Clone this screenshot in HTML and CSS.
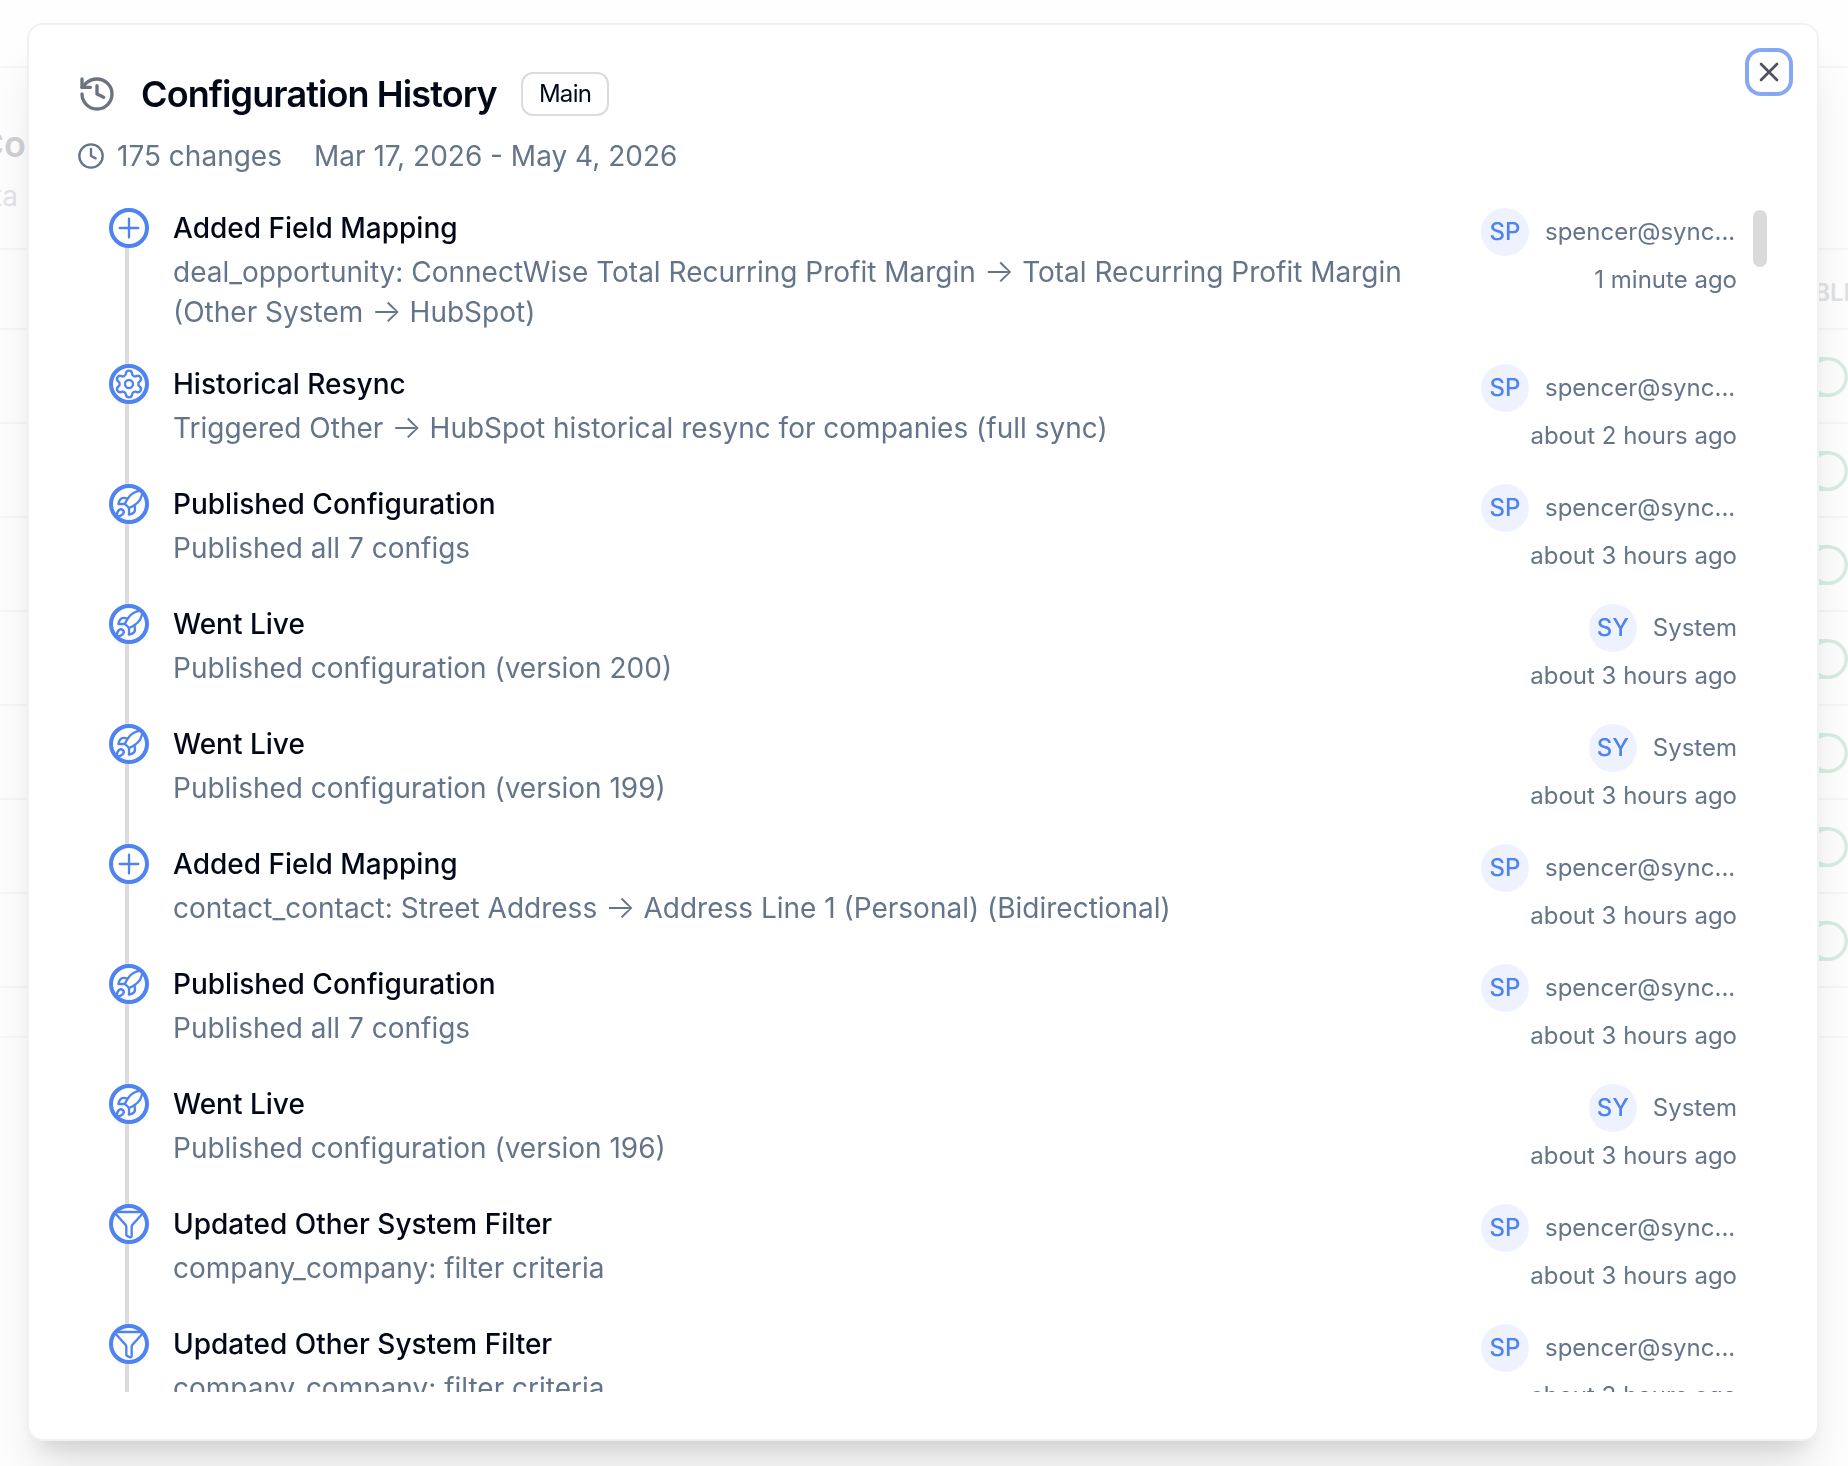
FILE: index.html
```html
<!DOCTYPE html>
<html lang="en">
<head>
<meta charset="utf-8">
<meta name="viewport" content="width=device-width, initial-scale=1">
<title>Configuration History</title>
<link rel="stylesheet" href="styles.css">
</head>
<body>
<svg class="sprite" aria-hidden="true">
  <symbol id="i-plus" viewBox="0 0 24 24"><path d="M5 12h14M12 5v14"/></symbol>
  <symbol id="i-gear" viewBox="0 0 24 24"><path d="M9.671 4.136a2.34 2.34 0 0 1 4.659 0 2.34 2.34 0 0 0 3.319 1.915 2.34 2.34 0 0 1 2.33 4.033 2.34 2.34 0 0 0 0 3.831 2.34 2.34 0 0 1-2.33 4.033 2.34 2.34 0 0 0-3.319 1.915 2.34 2.34 0 0 1-4.659 0 2.34 2.34 0 0 0-3.32-1.915 2.34 2.34 0 0 1-2.33-4.033 2.34 2.34 0 0 0 0-3.831A2.34 2.34 0 0 1 6.35 6.051a2.34 2.34 0 0 0 3.319-1.915"/><circle cx="12" cy="12" r="3"/></symbol>
  <symbol id="i-rocket" viewBox="0 0 24 24"><path d="M4.5 16.5c-1.5 1.26-2 5-2 5s3.74-.5 5-2c.71-.84.7-2.13-.09-2.91a2.18 2.18 0 0 0-2.91-.09z"/><path d="m12 15-3-3a22 22 0 0 1 2-3.95A12.88 12.88 0 0 1 22 2c0 2.72-.78 7.5-6 11a22.35 22.35 0 0 1-4 2z"/><path d="M9 12H4s.55-3.03 2-4c1.62-1.08 5 0 5 0"/><path d="M12 15v5s3.03-.55 4-2c1.08-1.62 0-5 0-5"/></symbol>
  <symbol id="i-funnel" viewBox="0 0 24 24"><path d="M10 20a1 1 0 0 0 .553.895l2 1A1 1 0 0 0 14 21v-7a2 2 0 0 1 .517-1.341L21.74 4.67A1 1 0 0 0 21 3H3a1 1 0 0 0-.742 1.67l7.225 7.989A2 2 0 0 1 10 14z"/></symbol>
</svg>

<div class="page">
  <div class="page-nav"></div>
  <div class="page-head">
    <p class="page-title">Co</p>
    <p class="page-sub">ta</p>
  </div>
  <table class="page-table">
    <thead><tr><td></td><th scope="col">ENABLED</th></tr></thead>
    <tbody>
      <tr><td></td><td><input class="switch" type="checkbox" role="switch" aria-label="Enable row 1" checked></td></tr>
      <tr><td></td><td><input class="switch" type="checkbox" role="switch" aria-label="Enable row 2" checked></td></tr>
      <tr><td></td><td><input class="switch" type="checkbox" role="switch" aria-label="Enable row 3" checked></td></tr>
      <tr><td></td><td><input class="switch" type="checkbox" role="switch" aria-label="Enable row 4" checked></td></tr>
      <tr><td></td><td><input class="switch" type="checkbox" role="switch" aria-label="Enable row 5" checked></td></tr>
      <tr><td></td><td><input class="switch" type="checkbox" role="switch" aria-label="Enable row 6" checked></td></tr>
      <tr><td></td><td><input class="switch" type="checkbox" role="switch" aria-label="Enable row 7" checked></td></tr>
    </tbody>
  </table>
  <div class="page-foot"></div>
</div>

<div class="overlay">
  <section class="modal" role="dialog" aria-modal="true" aria-labelledby="modal-title">
    <button class="close" type="button" aria-label="Close">
      <svg class="close-icon" viewBox="0 0 24 24"><path d="M18 6 6 18M6 6l12 12"/></svg>
    </button>

    <header class="modal-head">
      <div class="title-row">
        <svg class="history-icon" viewBox="0 0 24 24" aria-hidden="true"><path d="M3 12a9 9 0 1 0 9-9 9.750 9.750 0 0 0-6.740 2.740L3 8"/><path d="M3 3v5h5"/><path d="M12 7v5l4 2"/></svg>
        <h1 class="title" id="modal-title">Configuration History</h1>
        <span class="badge">Main</span>
      </div>
      <div class="summary">
        <span class="count">
          <svg class="clock-icon" viewBox="0 0 24 24" aria-hidden="true"><circle cx="12" cy="12" r="10"/><path d="M12 6v6l4 2"/></svg>
          175 changes
        </span>
        <span>Mar 17, 2026 - May 4, 2026</span>
      </div>
    </header>

    <div class="scroller">
      <ol class="timeline">
        <li class="event">
          <span class="marker"><svg class="icon"><use href="#i-plus"/></svg></span>
          <div class="what"><h2 class="event-title">Added Field Mapping</h2><p class="event-text">deal_opportunity: ConnectWise Total Recurring Profit Margin <span class="arrow">→</span> Total Recurring Profit Margin (Other System <span class="arrow">→</span> HubSpot)</p></div>
          <div class="who"><div class="user"><span class="avatar">SP</span><span class="name name-cut">spencer@sync...</span></div><time class="when">1 minute ago</time></div>
        </li>
        <li class="event">
          <span class="marker"><svg class="icon"><use href="#i-gear"/></svg></span>
          <div class="what"><h2 class="event-title">Historical Resync</h2><p class="event-text">Triggered Other <span class="arrow">→</span> HubSpot historical resync for companies (full sync)</p></div>
          <div class="who"><div class="user"><span class="avatar">SP</span><span class="name name-cut">spencer@sync...</span></div><time class="when">about 2 hours ago</time></div>
        </li>
        <li class="event">
          <span class="marker"><svg class="icon"><use href="#i-rocket"/></svg></span>
          <div class="what"><h2 class="event-title">Published Configuration</h2><p class="event-text">Published all 7 configs</p></div>
          <div class="who"><div class="user"><span class="avatar">SP</span><span class="name name-cut">spencer@sync...</span></div><time class="when">about 3 hours ago</time></div>
        </li>
        <li class="event">
          <span class="marker"><svg class="icon"><use href="#i-rocket"/></svg></span>
          <div class="what"><h2 class="event-title">Went Live</h2><p class="event-text">Published configuration (version 200)</p></div>
          <div class="who"><div class="user"><span class="avatar">SY</span><span class="name">System</span></div><time class="when">about 3 hours ago</time></div>
        </li>
        <li class="event">
          <span class="marker"><svg class="icon"><use href="#i-rocket"/></svg></span>
          <div class="what"><h2 class="event-title">Went Live</h2><p class="event-text">Published configuration (version 199)</p></div>
          <div class="who"><div class="user"><span class="avatar">SY</span><span class="name">System</span></div><time class="when">about 3 hours ago</time></div>
        </li>
        <li class="event">
          <span class="marker"><svg class="icon"><use href="#i-plus"/></svg></span>
          <div class="what"><h2 class="event-title">Added Field Mapping</h2><p class="event-text">contact_contact: Street Address <span class="arrow">→</span> Address Line 1 (Personal) (Bidirectional)</p></div>
          <div class="who"><div class="user"><span class="avatar">SP</span><span class="name name-cut">spencer@sync...</span></div><time class="when">about 3 hours ago</time></div>
        </li>
        <li class="event">
          <span class="marker"><svg class="icon"><use href="#i-rocket"/></svg></span>
          <div class="what"><h2 class="event-title">Published Configuration</h2><p class="event-text">Published all 7 configs</p></div>
          <div class="who"><div class="user"><span class="avatar">SP</span><span class="name name-cut">spencer@sync...</span></div><time class="when">about 3 hours ago</time></div>
        </li>
        <li class="event">
          <span class="marker"><svg class="icon"><use href="#i-rocket"/></svg></span>
          <div class="what"><h2 class="event-title">Went Live</h2><p class="event-text">Published configuration (version 196)</p></div>
          <div class="who"><div class="user"><span class="avatar">SY</span><span class="name">System</span></div><time class="when">about 3 hours ago</time></div>
        </li>
        <li class="event">
          <span class="marker"><svg class="icon"><use href="#i-funnel"/></svg></span>
          <div class="what"><h2 class="event-title">Updated Other System Filter</h2><p class="event-text">company_company: filter criteria</p></div>
          <div class="who"><div class="user"><span class="avatar">SP</span><span class="name name-cut">spencer@sync...</span></div><time class="when">about 3 hours ago</time></div>
        </li>
        <li class="event">
          <span class="marker"><svg class="icon"><use href="#i-funnel"/></svg></span>
          <div class="what"><h2 class="event-title">Updated Other System Filter</h2><p class="event-text">company_company: filter criteria</p></div>
          <div class="who"><div class="user"><span class="avatar">SP</span><span class="name name-cut">spencer@sync...</span></div><time class="when">about 3 hours ago</time></div>
        </li>
      </ol>
      <div class="thumb"></div>
    </div>
  </section>
</div>
</body>
</html>
```

FILE: styles.css
```css
* { box-sizing: border-box; margin: 0; padding: 0; }

:root {
  --ink: #020817;
  --muted: #64748b;
  --blue: #4f83f1;
  --line: #dbdbdb;
}

body {
  height: 100vh;
  overflow: hidden;
  background: #fefefe;
  color: var(--ink);
  font-family: Inter, "Liberation Sans", sans-serif;
  font-size: 28px;
  line-height: 40px;
}

.sprite { display: none; }

svg {
  display: block;
  flex: none;
  fill: none;
  stroke: currentColor;
  stroke-width: 2;
  stroke-linecap: round;
  stroke-linejoin: round;
}

/* Page behind the dialog, already faded */
.page-nav { height: 68px; border-bottom: 2px solid #f6f6f6; }

.page-head {
  width: 26px;
  height: 180px;
  padding-top: 54px;
  display: flex;
  flex-direction: column;
  align-items: flex-end;
  gap: 10px;
}
.page-title { font-size: 36px; line-height: 44px; font-weight: 600; color: #d0d1d4; }
.page-sub { padding-right: 8px; color: #e2e4e8; }

.page-table {
  width: 100%;
  table-layout: fixed;
  border-collapse: collapse;
  border-top: 2px solid #f6f6f6;
}
.page-table th {
  width: 88px;
  height: 80px;
  padding: 8px 0 0 4px;
  text-align: left;
  white-space: nowrap;
  font-size: 24px;
  font-weight: 600;
  color: #dfe1e5;
}
.page-table tr { border-bottom: 2px solid #f6f6f6; }
.page-table tbody td { height: 94px; text-align: right; }
.page-foot { height: 50px; border-bottom: 2px solid #f8f8f8; }

.switch {
  appearance: none;
  display: inline-block;
  vertical-align: middle;
  width: 72px;
  height: 40px;
  border-radius: 20px;
  background: radial-gradient(circle at 52px 20px, #fdfdfd 16px, #d6eee2 17px);
}

/* Dialog */
.overlay {
  position: fixed;
  inset: 0;
  display: flex;
  justify-content: center;
  padding: 23px 29px 25px 27px;
}

.modal {
  position: relative;
  display: flex;
  flex-direction: column;
  gap: 32px;
  width: 100%;
  max-width: 1792px;
  padding: 47px 48px;
  border: 2px solid #f1f1f1;
  border-radius: 16px;
  background: #fff;
  background-clip: padding-box;
  box-shadow: 0 40px 50px -10px rgba(0, 0, 0, .11), 0 16px 20px -10px rgba(0, 0, 0, .1);
}

.close {
  position: absolute;
  top: 31px;
  right: 32px;
  display: grid;
  place-items: center;
  width: 32px;
  height: 32px;
  border: 0;
  border-radius: 8px;
  background: #fff;
  color: #4d525d;
  box-shadow: 0 0 0 4px #fff, 0 0 0 8px #84a8f6;
}
.close-icon { width: 32px; height: 32px; }

.modal-head { display: flex; flex-direction: column; gap: 20px; }
.title-row { display: flex; align-items: center; gap: 24px; letter-spacing: -0.025em; }
.history-icon { width: 40px; height: 40px; color: #6b7280; }
.title { font-size: 36px; line-height: 44px; font-weight: 600; letter-spacing: -0.025em; }
.badge {
  padding: 4px 16px;
  border: 2px solid var(--line);
  border-radius: 12px;
  font-size: 24px;
  line-height: 32px;
}
.summary { display: flex; gap: 32px; color: var(--muted); }
.count { display: flex; align-items: center; gap: 12px; }
.clock-icon { width: 28px; height: 28px; }

.scroller { position: relative; flex: 1; min-height: 0; overflow: hidden; }
.timeline { position: relative; padding: 0 32px; list-style: none; }
.timeline::before {
  content: "";
  position: absolute;
  top: 0;
  bottom: 0;
  left: 48px;
  width: 4px;
  background: var(--line);
}

.event { display: flex; gap: 24px; padding-bottom: 32px; }
.marker {
  position: relative;
  flex: none;
  width: 40px;
  height: 40px;
  border: 4px solid var(--blue);
  border-radius: 50%;
  background: #fff;
  color: var(--blue);
}
.icon { width: 32px; height: 32px; stroke-width: 1.75; }

.what { flex: 1; display: flex; flex-direction: column; gap: 4px; }
.event-title { font-size: 28px; line-height: 40px; font-weight: 500; }
.event-text { color: var(--muted); }
.arrow { font-size: 32px; line-height: 1; font-weight: 300; }

.who {
  flex: none;
  width: 288px;
  display: flex;
  flex-direction: column;
  align-items: flex-end;
  gap: 8px;
  font-size: 24px;
  line-height: 32px;
  color: var(--muted);
}
.user { display: flex; align-items: center; gap: 16px; }
.avatar {
  display: grid;
  place-items: center;
  width: 48px;
  height: 48px;
  border-radius: 50%;
  background: #edf2fe;
  color: var(--blue);
  font-weight: 500;
}
.name-cut { width: 192px; }

.thumb {
  position: absolute;
  top: 2px;
  right: 2px;
  width: 14px;
  height: 57px;
  border-radius: 7px;
  background: #dadada;
}
```
